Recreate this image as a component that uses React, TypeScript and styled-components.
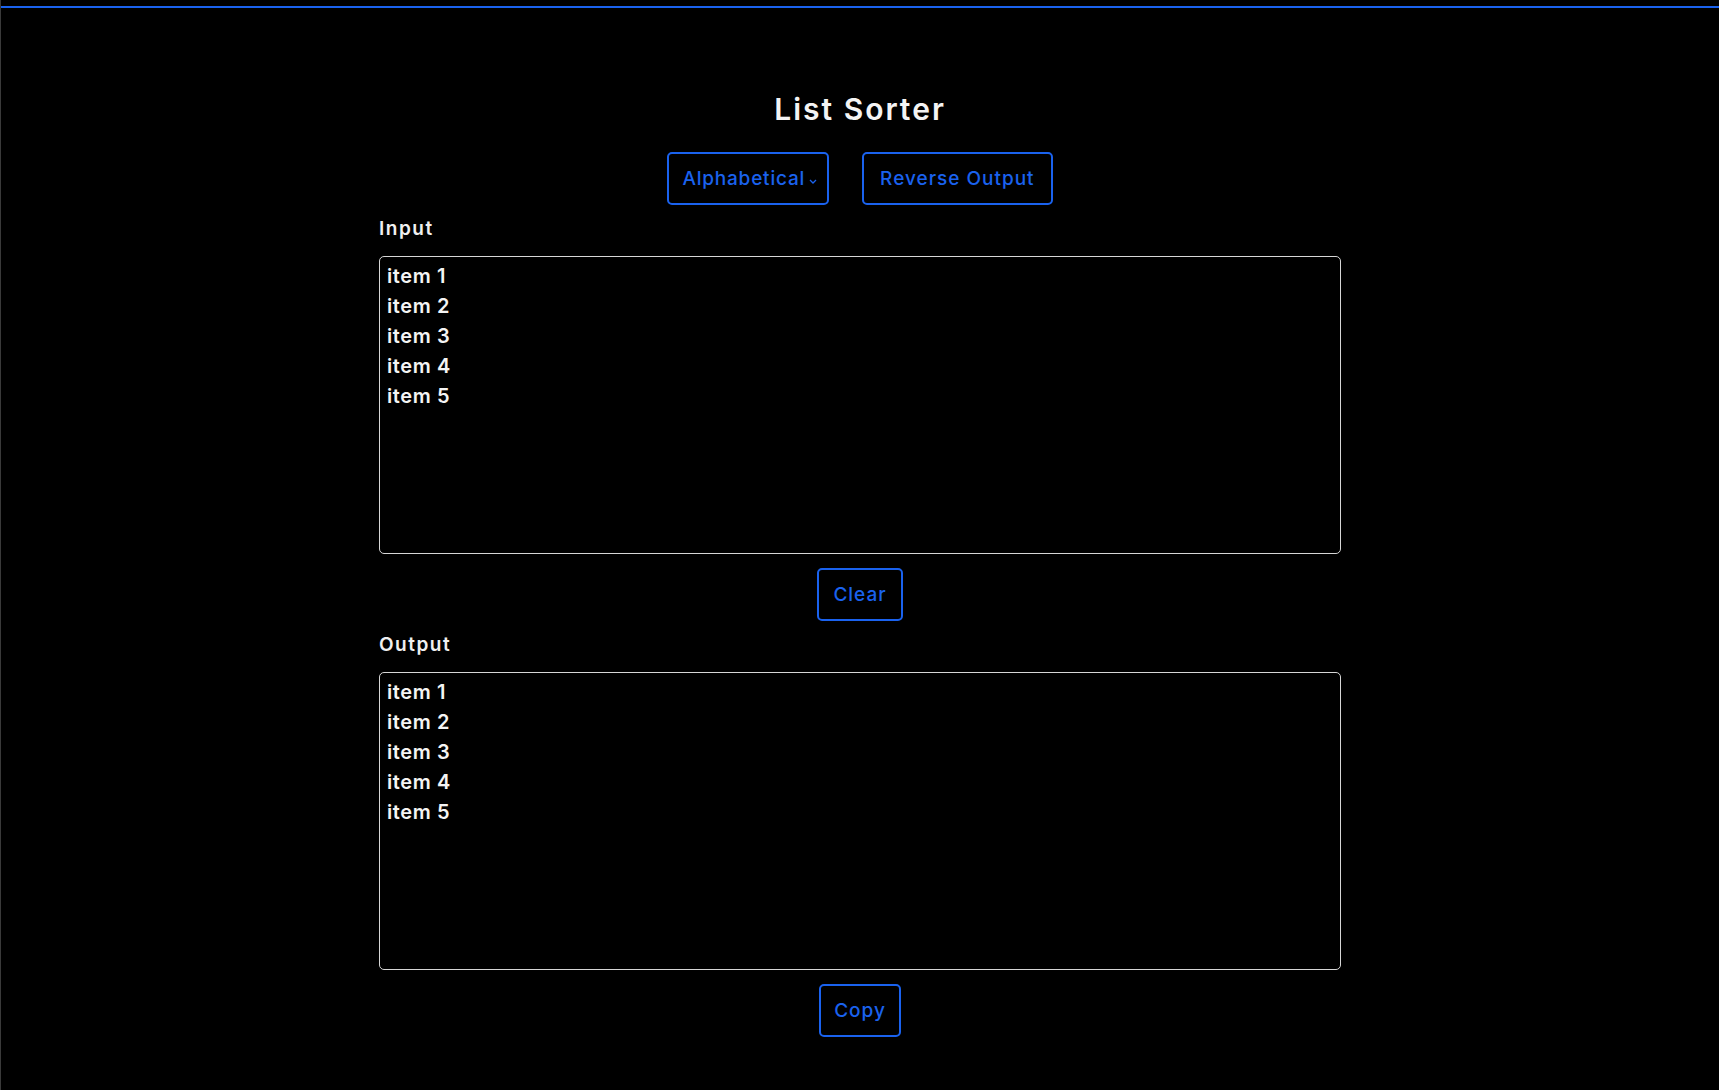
import { useMemo, useState } from "react";
import styled, { createGlobalStyle } from "styled-components";

const GlobalStyle = createGlobalStyle`
  html, body {
    margin: 0;
    padding: 0;
    background: #000;
  }
  body {
    font-family: Inter, "Noto Sans", sans-serif;
    color: #f2f2f2;
  }
`;

const Page = styled.div`
  min-height: 100vh;
  background: #000;
  border-left: 1px solid #3a3a3a;
  box-sizing: border-box;
  display: flex;
  flex-direction: column;
  align-items: center;
`;

const TopBar = styled.div`
  align-self: stretch;
  margin-top: 6px;
  height: 2px;
  background: #1a62ee;
`;

const Title = styled.h1`
  margin: 83px 0 0;
  font-size: 30px;
  line-height: 36px;
  font-weight: 600;
  letter-spacing: 2px;
  color: #f4f4f4;
`;

const Controls = styled.div`
  display: flex;
  gap: 33px;
  margin-top: 25px;
`;

const Button = styled.button<{ $pad?: number }>`
  display: inline-flex;
  align-items: center;
  gap: 4px;
  height: 53px;
  padding: 0 ${(p) => p.$pad ?? 16}px;
  background: transparent;
  border: 2px solid #1a62ee;
  border-radius: 5px;
  color: #1a62ee;
  font-family: Inter, "Noto Sans", sans-serif;
  font-size: 19px;
  font-weight: 500;
  letter-spacing: 1px;
  cursor: pointer;
  box-sizing: border-box;
`;

const SelectButton = styled(Button)`
  letter-spacing: 0.8px;
  padding: 0 10px 0 13px;
`;

const Section = styled.div`
  width: 962px;
  display: flex;
  flex-direction: column;
`;

const Label = styled.label`
  margin-top: 12px;
  font-size: 19px;
  line-height: 24px;
  font-weight: 600;
  color: #f0f0f0;
  letter-spacing: 1.5px;
`;

const Area = styled.textarea`
  margin-top: 15px;
  height: 298px;
  box-sizing: border-box;
  padding: 4px 7px;
  background: #000;
  border: 1px solid #d6d6d6;
  border-radius: 5px;
  color: #f4f4f4;
  font-family: Inter, "Noto Sans", sans-serif;
  font-size: 20px;
  font-weight: 600;
  letter-spacing: 0.6px;
  line-height: 30px;
  resize: none;
  outline: none;
`;

const Below = styled.div`
  display: flex;
  justify-content: center;
  margin-top: 14px;
`;

const Chevron = styled.svg`
  margin-top: 6px;
`;

const ChevronIcon = () => (
  <Chevron width="8" height="5" viewBox="0 0 8 5" fill="none">
    <path d="M1 1 4 4 7 1" stroke="currentColor" strokeWidth="1.3" />
  </Chevron>
);

const App = () => {
  const [input, setInput] = useState("item 1\nitem 2\nitem 3\nitem 4\nitem 5");
  const [reverse, setReverse] = useState(false);

  const output = useMemo(() => {
    const lines = input.split("\n").filter((l) => l.trim() !== "");
    lines.sort((a, b) => a.localeCompare(b));
    if (reverse) lines.reverse();
    return lines.join("\n");
  }, [input, reverse]);

  return (
    <Page>
      <GlobalStyle />
      <TopBar />
      <Title>List Sorter</Title>
      <Controls>
        <SelectButton>
          Alphabetical
          <ChevronIcon />
        </SelectButton>
        <Button onClick={() => setReverse((r) => !r)}>Reverse Output</Button>
      </Controls>
      <Section>
        <Label>Input</Label>
        <Area value={input} onChange={(e) => setInput(e.target.value)} />
        <Below>
          <Button $pad={14} onClick={() => setInput("")}>Clear</Button>
        </Below>
        <Label>Output</Label>
        <Area value={output} readOnly />
        <Below>
          <Button $pad={13} onClick={() => navigator.clipboard?.writeText(output)}>Copy</Button>
        </Below>
      </Section>
    </Page>
  );
};

export default App;
